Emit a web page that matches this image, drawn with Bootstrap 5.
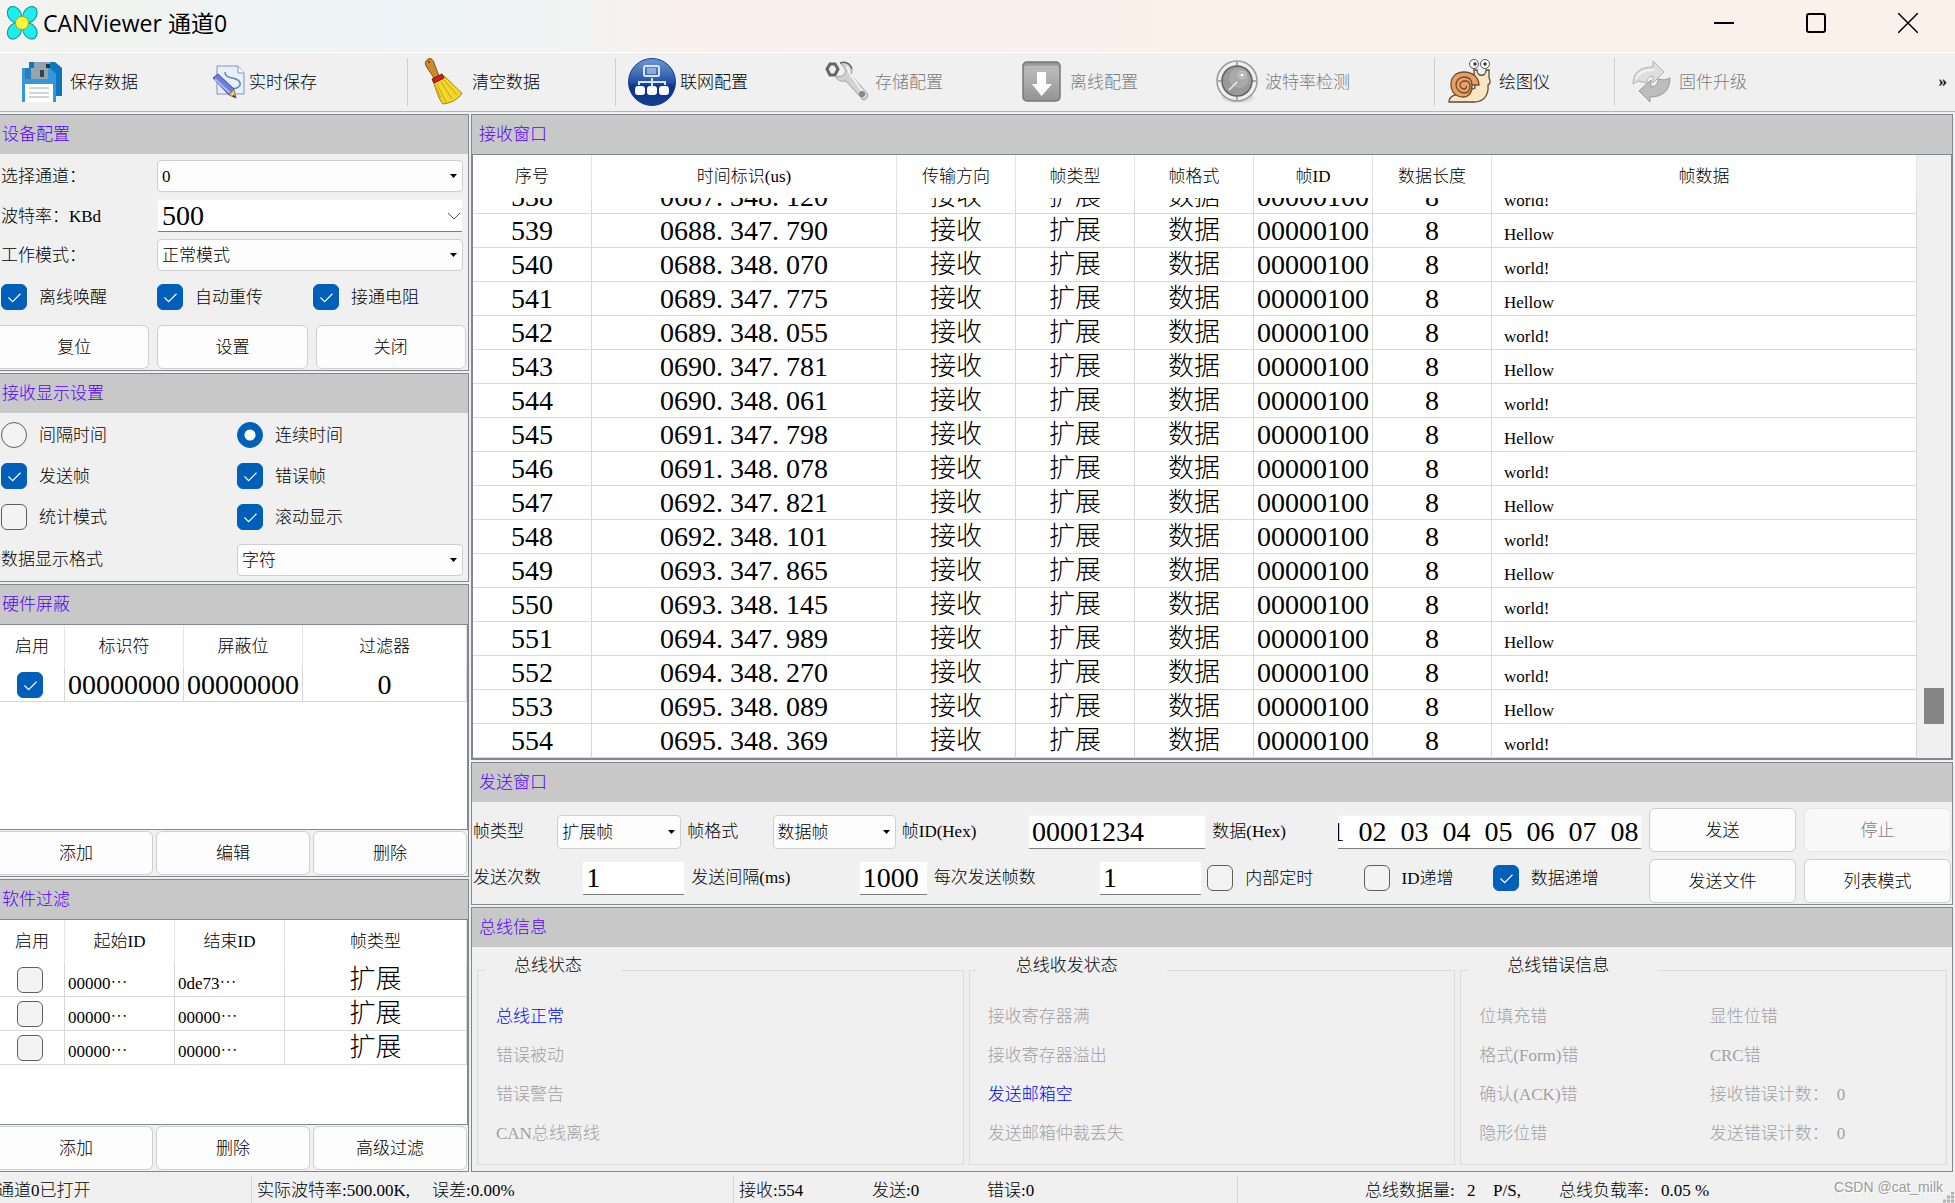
<!DOCTYPE html>
<html lang="zh-CN">
<head>
<meta charset="utf-8">
<meta name="viewport" content="width=device-width, initial-scale=1">
<title>CANViewer 通道0</title>
<link href="https://cdn.jsdelivr.net/npm/bootstrap@5.3.0/dist/css/bootstrap.min.css" rel="stylesheet">
<style>
:root{--edge:#828790;--line:#d8d8d8;--face:#f0f0f0;--accent:#005fb8}
body{font-family:"Liberation Serif","Noto Sans CJK SC",serif;font-size:17px;font-weight:300;line-height:24px;color:#000;background:var(--face);min-height:100vh}
input,select,button{font-weight:300}
.titlebar{height:53px;border-bottom:1px solid #fff;background:linear-gradient(90deg,#f3f3ef 0,#edf3f6 20%,#f2f3f2 30%,#f9f0ea 35%,#f9eeec 48%,#faf1ea 62%);padding:0 37px 6px 5px}
.titlebar h1{font:400 23px/32px "Open Sans","Noto Sans CJK SC",sans-serif}
.winbtns{gap:72px}
.winbtn{width:20px;height:20px;background:none;border:0;padding:0;display:block}
.winbtn svg,.tool svg{display:block}
.toolbar{height:59px;border-bottom:1px solid #b4b4b4;padding-left:18px}
.tool{width:195px;flex:none;border:0;background:none;padding:0;display:flex;align-items:center;gap:4px;text-align:left;color:#000}
.tool span{padding-top:2px}
.tool:disabled{color:#7c7c7c}
.tool-first{width:179px}.tool-mid{width:210px}.tool-wide{width:221px}.tool-slim{width:167px}
.toolsep{width:1px;height:48px;background:#cfcfcf;margin-right:12px}
.workarea{gap:2px;padding:2px 2px 0 0}
.leftside{width:469px;gap:2px}
.rightside{gap:2px;min-width:0}
.panel{border:1px solid var(--edge);display:flex;flex-direction:column}
.leftside .panel{border-left:0}
.panel-title{background:#c8c8c8;color:#50f;font-size:17px;line-height:24px;font-weight:300;height:39px;padding:8px 2px 0;margin:0}
.rightside .panel-title{padding-left:7px}
.devform{display:grid;grid-template-columns:157px 1fr;row-gap:7px;padding:6px 5px 0 0;align-items:center}
.devform label{padding:2px 0 0 1px}
.form-select,.form-control{font-size:17px;font-weight:300;line-height:24px;height:32px;border-radius:4px;border:1px solid #cfcfcf;color:#000;min-width:0}
.form-select{padding:1px 20px 0 4px;background:#fdfdfd url("data:image/svg+xml,%3Csvg xmlns='http://www.w3.org/2000/svg' width='7' height='4'%3E%3Cpath d='M0 0h7L3.5 4z'/%3E%3C/svg%3E") no-repeat right 5px center/7px 4px}
.big{font-size:28px}
.form-control.big{padding:0 3px;border:1px solid #f2f2f2;border-bottom:1px solid #7d7d7d;border-radius:2px;height:34px;line-height:32px}
.form-control.databytes{padding-left:0}
.devform .form-select.big{height:33px;border-color:#f2f2f2;border-bottom-color:#7d7d7d;border-radius:2px;line-height:30px;background:#fff url("data:image/svg+xml,%3Csvg xmlns='http://www.w3.org/2000/svg' width='14' height='8'%3E%3Cpath d='M1 1l6 6 6-6' fill='none' stroke='%23555'/%3E%3C/svg%3E") no-repeat right 1px center/14px 8px}
.form-check{display:flex;align-items:center;gap:12px;padding:0;margin:0;min-height:26px}
.form-check label{padding-top:1px}
.form-check .form-check-input,.cellcheck{float:none;margin:0;width:26px;height:26px;flex:none;border:1px solid #5f5f5f;background-color:#f3f3f3}
.form-check .form-check-input[type=checkbox],.cellcheck[type=checkbox]{border-radius:6px}
.form-check-input:checked,.form-check .form-check-input:checked{background-color:var(--accent);border-color:var(--accent)}
.form-check-input:checked[type=checkbox]{background-image:url("data:image/svg+xml,%3Csvg xmlns='http://www.w3.org/2000/svg' viewBox='0 0 26 26'%3E%3Cpath d='M7 13.5l4.500 4.500 8.500-8.500' fill='none' stroke='%23fff' stroke-width='1.300'/%3E%3C/svg%3E")}
.form-check-input:checked[type=radio]{background-image:url("data:image/svg+xml,%3Csvg xmlns='http://www.w3.org/2000/svg' viewBox='0 0 26 26'%3E%3Ccircle cx='13' cy='13' r='6' fill='%23fff'/%3E%3C/svg%3E")}
.checkline{display:grid;grid-template-columns:repeat(3,156px);padding:13px 0 0 1px}
.btn{font-size:17px;font-weight:300;line-height:24px;height:44px;padding:2px 0 0;background:#fdfdfd;border:1px solid #cfcfcf;border-radius:6px;color:#000;flex:1 1 0}
.btn:disabled{color:#7c7c7c;background:#f8f8f8;border-color:#e6e6e6;opacity:1}
.btnline{display:flex;gap:8px;padding:15px 2px 1px 0}
.btnline.tight{gap:3px;padding:1px 1px 1px 0}
.leftside .btnline .btn:first-child{border-left:0;border-top-left-radius:0;border-bottom-left-radius:0}
.showform{display:grid;grid-template-columns:236px 1fr;grid-template-rows:26px 26px 26px 30px;row-gap:15px;padding:9px 5px 6px 1px;align-items:center}
.listbox{background:#fff;border:solid var(--edge);border-width:1px 1px 1px 0;min-height:0;flex:1 1 0;overflow:hidden}
.grid-table{width:100%;table-layout:fixed;border-collapse:separate;border-spacing:0;margin:0}
.grid-table th{font-weight:300;height:43px;text-align:center;padding:1px 0 0;border-right:1px solid #e5e5e5}
.grid-table td{height:34px;padding:0;line-height:30px;text-align:center;border-right:1px solid var(--line);border-bottom:1px solid var(--line);font-size:28px;white-space:nowrap;overflow:hidden}
.grid-table td.han{font-size:26px}
.grid-table td.fine{font-size:17px;line-height:24px;text-align:left;padding:8px 0 0 3px}
.grid-table td .cellcheck{display:block;margin:0 0 0 17px}
.logbox{background:#fff;border:1px solid var(--edge);flex:1 1 0;min-height:0;display:flex}
.logview{flex:1 1 0;min-width:0;display:flex;flex-direction:column}
.logrows{flex:1 1 0;min-height:0;overflow:hidden;display:flex;align-items:flex-end}
.grid-table td.payload{padding-left:12px}
.stamp span{padding-right:7px}
.scrolltrack{width:34px;background:var(--face);padding:0 7px 34px 7px;display:flex;align-items:flex-end}
.scrollthumb{width:100%;height:36px;background:#858585}
.sendgrid{gap:7px;padding:6px 1px 1px 1px}
.fields{display:grid;align-items:center;height:44px;margin-top:2px}
.fields-a{grid-template-columns:84fr 124fr 91fr 123fr 132fr 178fr 131fr 304fr}
.fields-b{grid-template-columns:109fr 103fr 173fr 69fr 171fr 103fr 161fr 129fr 149fr}
.fields label.after{padding-left:6px}
.fields .form-check.after{padding-left:5px}
.fields>*{min-width:0;white-space:nowrap}
.fields .form-select{height:34px}
.sendbtns{display:grid;grid-template-columns:147px 147px;gap:7px 8px}
.buspanel{padding:8px 5px 6px;gap:5px}
.busgroup{border:1px solid #dcdcdc;flex:1 1 0;min-width:0;padding:0 18px 11px}
.busgroup legend{float:none;font-size:17px;font-weight:300;line-height:20px;height:30px;width:136px;padding:1px 0 9px 29px;margin:0 0 12px -11px}
.busgroup legend.wide{width:190px;padding-left:39px}
.busgroup ul{margin:0;padding:0;list-style:none;line-height:39px;color:#a0a0a4;flex:1 1 0}
.busgroup ul.errvals{padding-left:12px}
.busgroup li.on{color:#00f}
.errvals span{padding-left:8px}
.statusbar{height:31px}
.statusbar>div{padding:3px 0 0 5px;border-left:1px solid #d6d6d6;margin-top:4px;white-space:nowrap;height:27px;line-height:24px;display:flex}
.statusbar>.st-a{width:254px;padding-left:0;border:0;margin-left:-3px}
.statusbar>.st-b{width:482px}.statusbar>.st-c{width:504px}.statusbar>.st-d{padding-left:127px}
.st-b span:first-child{width:175px}.st-c span:nth-child(1){width:133px}.st-c span:nth-child(2){width:115px}
.st-d span:nth-child(1){width:102px}.st-d span:nth-child(2){width:26px}.st-d span:nth-child(3){width:66px}.st-d span:nth-child(4){width:102px}
.statusbar>.credit{margin-left:auto;padding:2px 0 0;border:0;font:14px/18px "Liberation Sans",sans-serif;color:#9b9b9b;text-shadow:1px 1px 0 #fff}
.statusbar .grip{align-self:flex-end;margin-right:1px}
</style>
<script src="https://cdn.jsdelivr.net/npm/bootstrap@5.3.0/dist/js/bootstrap.bundle.min.js"></script>
</head>
<body class="d-flex flex-column overflow-hidden vh-100">
<header>
  <div class="titlebar d-flex align-items-center">
    <svg width="34" height="34" viewBox="0 0 34 34" aria-hidden="true"><g fill="#1ceef0" stroke="#168f96" stroke-width="1"><ellipse cx="9.500" cy="8.500" rx="6.500" ry="8.500" transform="rotate(-32 9.500 8.500)"/><ellipse cx="25" cy="8.500" rx="6.500" ry="8.500" transform="rotate(32 25 8.500)"/><ellipse cx="9.500" cy="25" rx="6.500" ry="8.500" transform="rotate(32 9.500 25)"/><ellipse cx="25" cy="25" rx="6.500" ry="8.500" transform="rotate(-32 25 25)"/></g><circle cx="17" cy="17" r="6.500" fill="#fdf639" stroke="#b5a31b"/></svg>
    <h1 class="m-0 ms-1">CANViewer 通道0</h1>
    <div class="winbtns d-flex ms-auto">
      <button class="winbtn" aria-label="最小化"><svg width="20" height="20"><path d="M0 10h20" stroke="#000" stroke-width="2"/></svg></button>
      <button class="winbtn" aria-label="最大化"><svg width="20" height="20"><rect x="1" y="1" width="18" height="18" rx="2" fill="none" stroke="#000" stroke-width="2" /></svg></button>
      <button class="winbtn" aria-label="关闭"><svg width="20" height="20"><path d="M0 0l20 20M20 0L0 20" stroke="#000" stroke-width="1.500"/></svg></button>
    </div>
  </div>
  <div class="toolbar d-flex align-items-center">
    <button class="tool tool-first"><svg width="48" height="48" viewBox="0 0 48 48"><path d="M11 4h26l7 6v28H11z" fill="#0b78bf"/><path d="M16 4h16v6H16z" fill="#8fa4ae"/><path d="M28 6h4v6h-4z" fill="#263640"/><path d="M4 10h28l6 6v28H4z" fill="#3498db"/><path d="M7 10h6v11H7z" fill="#2980b9"/><path d="M13 10h17v11H13z" fill="#94a5ac"/><path d="M22 12h4v7h-4z" fill="#2c4656"/><path d="M7 26h28v18H7z" fill="#fff"/><path d="M11 30h20M11 35h20M11 39h20" stroke="#ccd5d9" stroke-width="2"/></svg><span>保存数据</span></button>
    <button class="tool tool-mid"><svg width="48" height="48" viewBox="0 0 48 48"><path d="M20 8h21l6 7v21H20z" fill="#e9eff9" stroke="#7d93c0"/><path d="M41 8v7h6" fill="#fff" stroke="#7d93c0"/><path d="M28 14c0 8 10 4 14 9s-3 9-9 7" fill="none" stroke="#5b87ba" stroke-width="1.500"/><path d="M16 20l5-4 16 15-5 6z" fill="#6d7fd8" stroke="#3c4da4"/><path d="M18 21l15 14" stroke="#a9b7f5" stroke-width="2"/><path d="M37 31l-5 6 7 3z" fill="#eccb87" stroke="#8f7138"/><path d="M37 37l2 3-4-2z" fill="#222"/></svg><span>实时保存</span></button>
    <i class="toolsep"></i>
    <button class="tool"><svg width="48" height="48" viewBox="0 0 48 48"><path d="M7 2c3-3 6-1 7 3l5 13-5 2L6 8C5 5 5 4 7 2z" fill="#cc8a2c" stroke="#805010"/><circle cx="9" cy="4" r="1" fill="#5a3200"/><path d="M13 23l11-5c9 8 14 14 18 17-3 6-11 10-19 11-5-6-6-12-10-23z" fill="#f3d72a" stroke="#a48209"/><path d="M17 26l9 18M21 24l11 17M24 22l13 15M15 27l6 13" stroke="#c4a312" fill="none"/><path d="M12 21l10-5 2 4-10 5z" fill="#cf2020" stroke="#7c1010"/></svg><span>清空数据</span></button>
    <i class="toolsep"></i>
    <button class="tool"><svg width="48" height="48" viewBox="0 0 48 48"><defs><linearGradient id="netblue" x2="0" y2="1"><stop stop-color="#6e98d6"/><stop offset=".5" stop-color="#2453a5"/><stop offset=".6" stop-color="#0b3286"/><stop offset="1" stop-color="#163e8f"/></linearGradient></defs><circle cx="24" cy="24" r="23.500" fill="url(#netblue)" stroke="#183e87"/><rect x="16" y="8" width="15" height="10" rx="1.500" fill="none" stroke="#d8e5fa" stroke-width="2"/><path d="M19 11h9M19 13h9M19 15h9" stroke="#d8e5fa"/><path d="M24 20v8M11 27v-3h26v3" fill="none" stroke="#d8e5fa" stroke-width="2"/><g fill="#fff"><rect x="7" y="28" width="10" height="9" rx="3"/><rect x="19" y="28" width="10" height="9" rx="3"/><rect x="31" y="28" width="10" height="9" rx="3"/></g></svg><span>联网配置</span></button>
    <button class="tool" disabled><svg width="48" height="48" viewBox="0 0 48 48"><path d="M17 5c6-2 12 2 12 8l-1 4 16 18c2 3 0 7-4 7L23 23c-5 1-9-1-10-4l7-1 3-5-3-5z" fill="#d2d2d2" stroke="#a2a2a2"/><path d="M7 6h5l3 5-3 6H7l-3-6z" fill="#eee" stroke="#666" stroke-width="3"/><path d="M17 5c6-2 10 1 12 6" fill="none" stroke="#666" stroke-width="1.500"/><path d="M24 8l3 8 13 18" fill="none" stroke="#f3f3f3" stroke-width="2"/><circle cx="39" cy="36" r="2.500" fill="#8b8b8b" stroke="#777"/></svg><span>存储配置</span></button>
    <button class="tool" disabled><svg width="48" height="48" viewBox="0 0 48 48"><defs><linearGradient id="dlgrey" x2="0" y2="1"><stop stop-color="#8d8d8d"/><stop offset=".2" stop-color="#bababa"/><stop offset="1" stop-color="#939393"/></linearGradient></defs><rect x="5" y="4" width="37" height="39" rx="4" fill="url(#dlgrey)" stroke="#777" stroke-width="1.500"/><path d="M7 9h33" stroke="#d0d0d0"/><path d="M19 14h9v12h6L23.500 38 14 26h5z" fill="#fff"/></svg><span>离线配置</span></button>
    <button class="tool tool-wide" disabled><svg width="48" height="48" viewBox="0 0 48 48"><ellipse cx="25" cy="40" rx="16" ry="5" fill="#ddd"/><circle cx="24" cy="23" r="20" fill="#eee" stroke="#999" stroke-width="1.500"/><path d="M24 3v7M24 36v7M4 23h7M37 23h7" stroke="#aaa" stroke-width="2"/><circle cx="24" cy="23" r="15" fill="#9a9a9a" stroke="#636363" stroke-width="1.500"/><circle cx="26" cy="20" r="10" fill="#a9a9a9"/><path d="M16 32l8-8" stroke="#eee" stroke-width="1.500"/><circle cx="29" cy="17" r="4" fill="#b3b3b3" stroke="#c7c7c7"/><circle cx="29" cy="17" r="1.500" fill="#fff"/></svg><span>波特率检测</span></button>
    <i class="toolsep"></i>
    <button class="tool tool-slim"><svg width="48" height="48" viewBox="0 0 48 48"><path d="M2 44c0-5 5-8 12-8l14-6-1-18h3c0 7 9 7 9 0h3v8c2 3 1 6-1 7 1 11-5 17-14 17z" fill="#f8e7c4" stroke="#5c4a3a" stroke-width="1.300"/><circle cx="27" cy="6" r="4.500" fill="#fff" stroke="#555"/><circle cx="38" cy="6" r="4.500" fill="#fff" stroke="#555"/><circle cx="28" cy="6" r="1.700" fill="#333"/><circle cx="38" cy="6" r="1.700" fill="#333"/><path d="M32 27H25c0 7-2 12-9 12-8 0-12-6-12-13s5-12 13-12 15 5 15 13z" fill="#e3a26c" stroke="#7b4825" stroke-width="1.300"/><path d="M25 27c0-5-3-8-8-8s-8 4-8 8 4 8 8 8 6-3 6-7-2-5-5-5-5 2-5 4 2 4 4 4 3-2 2-3" fill="none" stroke="#7b4825" stroke-width="1.300"/></svg><span>绘图仪</span></button>
    <i class="toolsep"></i>
    <button class="tool" disabled><svg width="48" height="48" viewBox="0 0 48 48"><path d="M6 26c0-12 8-17 20-17V3l11 11-11 11v-7c-6 1-6 4-6 7l-9-2z" fill="#dedede" stroke="#b0b0b0"/><path d="M43 20c0 13-8 19-20 19v5L12 33l12-11v7c6-1 7-4 7-8l6 1z" fill="#bdbdbd" stroke="#9a9a9a"/><path d="M9 21c2-6 8-9 18-9" fill="none" stroke="#f3f3f3" stroke-width="2"/></svg><span>固件升级</span></button>
    <button class="border-0 bg-transparent p-0 ms-auto me-2 fw-bold" aria-label="更多">»</button>
  </div>
</header>

<main class="workarea d-flex flex-fill overflow-hidden">
  <aside class="leftside d-flex flex-column flex-shrink-0">
    <section class="panel">
      <h2 class="panel-title">设备配置</h2>
      <div class="devform">
        <label for="channel">选择通道：</label><select id="channel" class="form-select"><option>0</option></select>
        <label for="baud">波特率：KBd</label><select id="baud" class="form-select big"><option>500</option></select>
        <label for="mode">工作模式：</label><select id="mode" class="form-select"><option>正常模式</option></select>
      </div>
      <div class="checkline">
        <div class="form-check"><input class="form-check-input" type="checkbox" id="wake" checked><label for="wake">离线唤醒</label></div>
        <div class="form-check"><input class="form-check-input" type="checkbox" id="retry" checked><label for="retry">自动重传</label></div>
        <div class="form-check"><input class="form-check-input" type="checkbox" id="resist" checked><label for="resist">接通电阻</label></div>
      </div>
      <div class="btnline"><button class="btn">复位</button><button class="btn">设置</button><button class="btn">关闭</button></div>
    </section>
    <section class="panel">
      <h2 class="panel-title">接收显示设置</h2>
      <div class="showform">
        <div class="form-check"><input class="form-check-input" type="radio" name="timing" id="interval"><label for="interval">间隔时间</label></div>
        <div class="form-check"><input class="form-check-input" type="radio" name="timing" id="running" checked><label for="running">连续时间</label></div>
        <div class="form-check"><input class="form-check-input" type="checkbox" id="txframe" checked><label for="txframe">发送帧</label></div>
        <div class="form-check"><input class="form-check-input" type="checkbox" id="errframe" checked><label for="errframe">错误帧</label></div>
        <div class="form-check"><input class="form-check-input" type="checkbox" id="stats"><label for="stats">统计模式</label></div>
        <div class="form-check"><input class="form-check-input" type="checkbox" id="follow" checked><label for="follow">滚动显示</label></div>
        <label for="format">数据显示格式</label><select id="format" class="form-select"><option>字符</option></select>
      </div>
    </section>
    <section class="panel flex-fill">
      <h2 class="panel-title">硬件屏蔽</h2>
      <div class="listbox">
        <table class="grid-table">
          <colgroup><col style="width:65px"><col style="width:119px"><col style="width:119px"><col></colgroup>
          <thead><tr><th>启用</th><th>标识符</th><th>屏蔽位</th><th>过滤器</th></tr></thead>
          <tbody><tr><td><input class="form-check-input cellcheck" type="checkbox" aria-label="启用" checked></td><td>00000000</td><td>00000000</td><td>0</td></tr></tbody>
        </table>
      </div>
      <div class="btnline tight"><button class="btn">添加</button><button class="btn">编辑</button><button class="btn">删除</button></div>
    </section>
    <section class="panel flex-fill">
      <h2 class="panel-title">软件过滤</h2>
      <div class="listbox">
        <table class="grid-table">
          <colgroup><col style="width:65px"><col style="width:110px"><col style="width:110px"><col></colgroup>
          <thead><tr><th>启用</th><th>起始ID</th><th>结束ID</th><th>帧类型</th></tr></thead>
          <tbody>
            <tr><td><input class="form-check-input cellcheck" type="checkbox" aria-label="启用"></td><td class="fine">00000⋯</td><td class="fine">0de73⋯</td><td class="han">扩展</td></tr>
            <tr><td><input class="form-check-input cellcheck" type="checkbox" aria-label="启用"></td><td class="fine">00000⋯</td><td class="fine">00000⋯</td><td class="han">扩展</td></tr>
            <tr><td><input class="form-check-input cellcheck" type="checkbox" aria-label="启用"></td><td class="fine">00000⋯</td><td class="fine">00000⋯</td><td class="han">扩展</td></tr>
          </tbody>
        </table>
      </div>
      <div class="btnline tight"><button class="btn">添加</button><button class="btn">删除</button><button class="btn">高级过滤</button></div>
    </section>
  </aside>

  <div class="rightside d-flex flex-column flex-fill">
    <section class="panel flex-fill">
      <h2 class="panel-title">接收窗口</h2>
      <div class="logbox">
        <div class="logview">
          <table class="grid-table">
            <colgroup><col style="width:119px"><col style="width:305px"><col style="width:119px"><col style="width:119px"><col style="width:119px"><col style="width:119px"><col style="width:119px"><col></colgroup>
            <thead><tr><th>序号</th><th>时间标识(us)</th><th>传输方向</th><th>帧类型</th><th>帧格式</th><th>帧ID</th><th>数据长度</th><th>帧数据</th></tr></thead>
          </table>
          <div class="logrows">
            <table class="grid-table">
              <colgroup><col style="width:119px"><col style="width:305px"><col style="width:119px"><col style="width:119px"><col style="width:119px"><col style="width:119px"><col style="width:119px"><col></colgroup>
              <tbody id="frames"></tbody>
            </table>
          </div>
        </div>
        <div class="scrolltrack"><div class="scrollthumb"></div></div>
      </div>
    </section>

    <section class="panel">
      <h2 class="panel-title">发送窗口</h2>
      <div class="sendgrid d-flex">
        <div class="flex-fill">
          <div class="fields fields-a">
            <label for="ftype">帧类型</label><select id="ftype" class="form-select"><option>扩展帧</option></select>
            <label for="fformat" class="after">帧格式</label><select id="fformat" class="form-select"><option>数据帧</option></select>
            <label for="fid" class="after">帧ID(Hex)</label><input id="fid" class="form-control big" value="00001234">
            <label for="fdata" class="after">数据(Hex)</label><input id="fdata" class="form-control big databytes" value="01&#8194;02&#8194;03&#8194;04&#8194;05&#8194;06&#8194;07&#8194;08">
          </div>
          <div class="fields fields-b">
            <label for="times">发送次数</label><input id="times" class="form-control big" value="1">
            <label for="gapms" class="after">发送间隔(ms)</label><input id="gapms" class="form-control big" value="1000">
            <label for="burst" class="after">每次发送帧数</label><input id="burst" class="form-control big" value="1">
            <div class="form-check after"><input class="form-check-input" type="checkbox" id="timer"><label for="timer">内部定时</label></div>
            <div class="form-check"><input class="form-check-input" type="checkbox" id="idinc"><label for="idinc">ID递增</label></div>
            <div class="form-check"><input class="form-check-input" type="checkbox" id="datainc" checked><label for="datainc">数据递增</label></div>
          </div>
        </div>
        <div class="sendbtns"><button class="btn">发送</button><button class="btn" disabled>停止</button><button class="btn">发送文件</button><button class="btn">列表模式</button></div>
      </div>
    </section>

    <section class="panel">
      <h2 class="panel-title">总线信息</h2>
      <div class="buspanel d-flex">
        <fieldset class="busgroup"><legend>总线状态</legend>
          <ul><li class="on">总线正常</li><li>错误被动</li><li>错误警告</li><li>CAN总线离线</li></ul></fieldset>
        <fieldset class="busgroup"><legend class="wide">总线收发状态</legend>
          <ul><li>接收寄存器满</li><li>接收寄存器溢出</li><li class="on">发送邮箱空</li><li>发送邮箱仲裁丢失</li></ul></fieldset>
        <fieldset class="busgroup"><legend class="wide">总线错误信息</legend>
          <div class="d-flex"><ul><li>位填充错</li><li>格式(Form)错</li><li>确认(ACK)错</li><li>隐形位错</li></ul>
          <ul class="errvals"><li>显性位错</li><li>CRC错</li><li>接收错误计数：<span>0</span></li><li>发送错误计数：<span>0</span></li></ul></div></fieldset>
      </div>
    </section>
  </div>
</main>

<footer class="statusbar d-flex">
  <div class="st-a">通道0已打开</div>
  <div class="st-b"><span>实际波特率:500.00K,</span><span>误差:0.00%</span></div>
  <div class="st-c"><span>接收:554</span><span>发送:0</span><span>错误:0</span></div>
  <div class="st-d"><span>总线数据量:</span><span>2</span><span>P/S,</span><span>总线负载率:</span><span>0.05 %</span></div>
  <div class="credit">CSDN @cat_milk</div>
  <svg class="grip" width="11" height="11" aria-hidden="true"><path d="M0 9h3M4 9h3M8 9h3M4 5h3M8 5h3M8 1h3" stroke="#b0b0b0" stroke-width="3"/></svg>
</footer>
<script>
const stamps = ["0687.348.120","0688.347.790","0688.348.070","0689.347.775","0689.348.055","0690.347.781","0690.348.061","0691.347.798","0691.348.078","0692.347.821","0692.348.101","0693.347.865","0693.348.145","0694.347.989","0694.348.270","0695.348.089","0695.348.369"];
document.getElementById("frames").innerHTML = stamps.map((t, i) => {
  const [a, b, c] = t.split(".");
  return `<tr><td>${538 + i}</td><td class="stamp"><span>${a}.</span><span>${b}.</span>${c}</td><td class="han">接收</td><td class="han">扩展</td><td class="han">数据</td><td>00000100</td><td>8</td><td class="fine payload">${i % 2 ? "Hellow" : "world!"}</td></tr>`;
}).join("");
// keep the last data byte in view
const data = document.getElementById("fdata");
data.scrollLeft = data.scrollWidth;
</script>
</body>
</html>
